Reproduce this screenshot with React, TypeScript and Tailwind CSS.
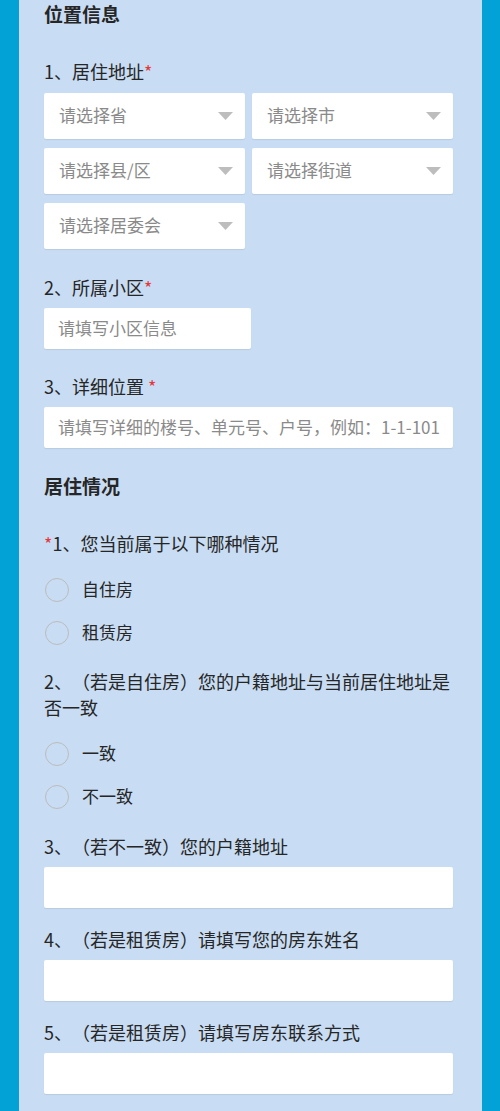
import type { ReactNode } from 'react';

const font = { fontFamily: '"Noto Sans CJK SC", "Noto Sans", Roboto, sans-serif' };

function Star() {
  return <span className="text-[#e4393c]">*</span>;
}

function Label({ children, className = '' }: { children: ReactNode; className?: string }) {
  return <div className={`text-[18px] leading-[26px] text-[#262626] ${className}`}>{children}</div>;
}

function Heading({ children, className = '' }: { children: ReactNode; className?: string }) {
  return <div className={`text-[19px] leading-[28px] font-semibold text-[#262626] ${className}`}>{children}</div>;
}

function Select({ placeholder }: { placeholder: string }) {
  return (
    <div className="flex h-[46px] items-center justify-between rounded-[2px] bg-white pb-[3px] pl-[15px] pr-[12px] shadow-[0_1px_1px_rgba(0,0,0,0.08)]">
      <span className="text-[17px] text-[#8a8a8a]">{placeholder}</span>
      <svg width="15" height="8" viewBox="0 0 15 8" aria-hidden="true" className="mt-[3px]">
        <path d="M0 0 L15 0 L7.5 8 Z" fill="#bdbdbd" />
      </svg>
    </div>
  );
}

function Input({ placeholder = '', className = '' }: { placeholder?: string; className?: string }) {
  return (
    <div className={`flex h-[41px] items-center rounded-[2px] bg-white px-[14px] pb-[2px] shadow-[0_1px_1px_rgba(0,0,0,0.08)] ${className}`}>
      <span className="text-[17px] text-[#8a8a8a] whitespace-nowrap">{placeholder}</span>
    </div>
  );
}

function Radio({ label }: { label: string }) {
  return (
    <div className="flex h-[43px] items-center">
      <span className="ml-[1px] h-[24px] w-[24px] rounded-full border-[1.5px] border-[#bcbcbc]" />
      <span className="ml-[13px] pb-[2px] text-[17px] text-[#262626]">{label}</span>
    </div>
  );
}

export default function App() {
  return (
    <div className="min-h-[1111px] bg-[#02a2d6] pl-[19px] pr-[18px] [text-spacing-trim:space-all]" style={font}>
      <div className="min-h-[1111px] bg-[#c8dcf3] pl-[25px] pr-[29px]">
        <Heading>位置信息</Heading>

        <Label className="mt-[30px]">1、居住地址<Star /></Label>
        <div className="mt-[9px] grid grid-cols-2 gap-x-[7px] gap-y-[9px]">
          <Select placeholder="请选择省" />
          <Select placeholder="请选择市" />
          <Select placeholder="请选择县/区" />
          <Select placeholder="请选择街道" />
          <Select placeholder="请选择居委会" />
        </div>

        <Label className="mt-[25px]">2、所属小区<Star /></Label>
        <Input className="mt-[8px] w-[207px]" placeholder="请填写小区信息" />

        <Label className="mt-[24px]">3、详细位置 <Star /></Label>
        <Input className="mt-[8px]" placeholder="请填写详细的楼号、单元号、户号，例如：1-1-101" />

        <Heading className="mt-[24px]">居住情况</Heading>

        <Label className="mt-[30px]"><Star />1、您当前属于以下哪种情况</Label>
        <div className="mt-[12px]">
          <Radio label="自住房" />
          <Radio label="租赁房" />
        </div>

        <Label className="mt-[14px] leading-[25px]">2、（若是自住房）您的户籍地址与当前居住地址是否一致</Label>
        <div className="mt-[12px]">
          <Radio label="一致" />
          <Radio label="不一致" />
        </div>

        <Label className="mt-[15px]">3、（若不一致）您的户籍地址</Label>
        <Input className="mt-[8px] h-[40px]" />

        <Label className="mt-[18px]">4、（若是租赁房）请填写您的房东姓名</Label>
        <Input className="mt-[8px] h-[40px]" />

        <Label className="mt-[18px]">5、（若是租赁房）请填写房东联系方式</Label>
        <Input className="mt-[8px] h-[40px]" />
      </div>
    </div>
  );
}
